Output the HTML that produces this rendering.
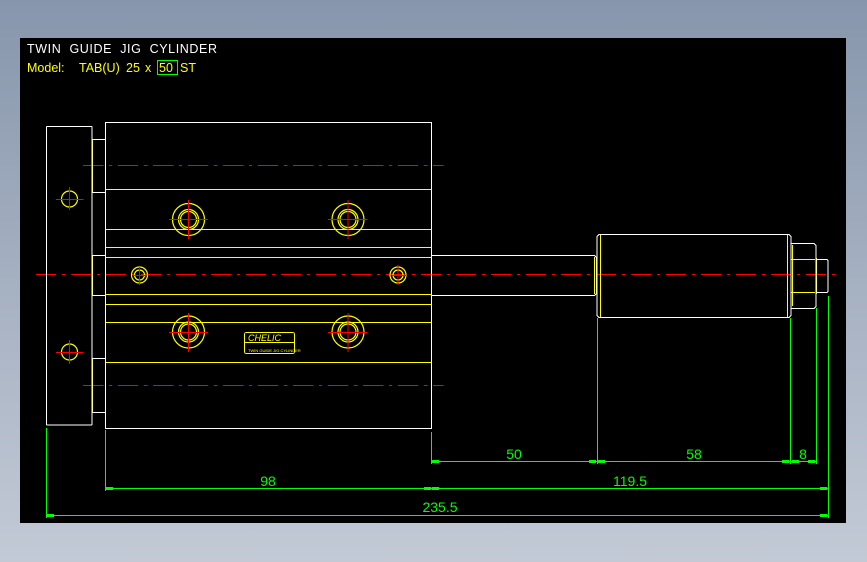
<!DOCTYPE html>
<html><head><meta charset="utf-8"><style>
html,body{margin:0;padding:0;width:867px;height:562px;overflow:hidden;background:linear-gradient(#8796ac,#c3cad6);}
svg{position:absolute;left:0;top:0}
text{font-family:"Liberation Sans",sans-serif}
</style></head><body>
<svg width="867" height="562" viewBox="0 0 867 562">
<rect x="20" y="38" width="826" height="485" fill="#000"/>
<text x="27" y="53" fill="#fff" font-size="12.5" letter-spacing="0.6" xml:space="preserve">TWIN  GUIDE  JIG  CYLINDER</text>
<g fill="#ff0" font-size="12.5">
<text x="27" y="72">Model:</text>
<text x="79" y="72">TAB(U)</text>
<text x="126" y="72">25</text>
<text x="145" y="72">x</text>
<text x="159" y="72">50</text>
<text x="180" y="72">ST</text>
</g>
<rect x="157.5" y="60.5" width="20" height="14" fill="none" stroke="#0f0" stroke-width="1"/>
<g fill="none" stroke-width="1" shape-rendering="crispEdges">
<g stroke="#f00" stroke-dasharray="20,6,3,6">
<line x1="83" y1="165.5" x2="443" y2="165.5"/>
<line x1="36" y1="274.5" x2="838" y2="274.5"/>
<line x1="83" y1="385.5" x2="443" y2="385.5"/>
</g>
<g stroke="#ff0">
<line x1="92.5" y1="139" x2="92.5" y2="192"/>
<line x1="92.5" y1="255" x2="92.5" y2="295"/>
<line x1="92.5" y1="358" x2="92.5" y2="412"/>
<line x1="105.5" y1="139" x2="105.5" y2="412"/>
<line x1="106" y1="189.5" x2="431" y2="189.5"/>
<line x1="106" y1="229.5" x2="431" y2="229.5"/>
<line x1="106" y1="247.5" x2="431" y2="247.5"/>
<line x1="106" y1="257.5" x2="431" y2="257.5"/>
<line x1="106" y1="294.5" x2="431" y2="294.5"/>
<line x1="106" y1="304.5" x2="431" y2="304.5"/>
<line x1="106" y1="322.5" x2="431" y2="322.5"/>
<line x1="106" y1="362.5" x2="431" y2="362.5"/>
<line x1="594.5" y1="257" x2="594.5" y2="294"/>
<line x1="600.5" y1="235" x2="600.5" y2="317"/>
<line x1="787.5" y1="235" x2="787.5" y2="317"/>
<line x1="791" y1="259.5" x2="815" y2="259.5"/>
<line x1="791" y1="292.5" x2="815" y2="292.5"/>
<line x1="792.5" y1="245" x2="792.5" y2="306"/>
<line x1="816.5" y1="258" x2="816.5" y2="294"/>
<rect x="244.5" y="332.5" width="50" height="21" rx="2"/>
<line x1="245" y1="342.5" x2="294" y2="342.5"/>
</g>
<g stroke="#fff">
<rect x="46.5" y="126.5" width="45.5" height="298.5" rx="1"/>
<rect x="105.5" y="122.5" width="326" height="306"/>
<path d="M92 139.5h13M92 192.5h13M92 255.5h13M92 295.5h13M92 358.5h13M92 412.5h13"/>
<path d="M431.5 255.5h163l2 2v36l-2 2h-163"/>
<path d="M599 234.5h190l2 2v79l-2 2h-190l-2-2v-79z"/>
<path d="M791 243.5h23l2 2v61l-2 2h-23"/>
<path d="M816 259.5h11l1 1v31l-1 1h-11"/>
</g>
<g stroke="#0f0">
<path d="M46.5 428v90M105.5 430v61M431.5 432v32M597.5 318v146M790.5 318v146M816.5 308v156M828.5 296v222"/>
<path d="M431.5 461.5h385M105.5 488.5h723M46.5 515.5h782"/>
</g>
</g>
<g fill="none" stroke="#ff0" stroke-width="1.2">
<circle cx="188.5" cy="219.5" r="16"/><circle cx="188.5" cy="219.5" r="10"/><circle cx="188.5" cy="219.5" r="8"/>
<circle cx="348" cy="219.5" r="16"/><circle cx="348" cy="219.5" r="10"/><circle cx="348" cy="219.5" r="8"/>
<circle cx="188.5" cy="332" r="16"/><circle cx="188.5" cy="332" r="10"/><circle cx="188.5" cy="332" r="8"/>
<circle cx="348" cy="332" r="16"/><circle cx="348" cy="332" r="10"/><circle cx="348" cy="332" r="8"/>
<circle cx="139.5" cy="275" r="8"/><circle cx="139.5" cy="275" r="5"/>
<circle cx="398" cy="275" r="8"/><circle cx="398" cy="275" r="5"/>
<circle cx="69.5" cy="199" r="8"/><circle cx="69.5" cy="352" r="8"/>
</g>
<g stroke="#f00" stroke-width="1" shape-rendering="crispEdges">
<path d="M169 219.5h39M188.5 200v39M328 219.5h39M348 200v39M169 332.5h39M188.5 313v39M328 332.5h39M348 313v39M133 275.5h14M139.5 267v18M392 275.5h14M398 265v20M56 199.5h27M69.5 187v23M56 352.5h27M69.5 340v24"/>
</g>
<text x="248" y="341" fill="#ff0" font-size="9" font-style="italic">CHELIC</text>
<text x="248" y="352" fill="#ff0" font-size="4">TWIN GUIDE JIG CYLINDER</text>
<g fill="#0f0">
<rect x="432" y="460" width="7" height="3"/><rect x="589" y="460" width="7" height="3"/><rect x="598" y="460" width="7" height="3"/><rect x="782" y="460" width="7" height="3"/><rect x="792" y="460" width="7" height="3"/><rect x="808" y="460" width="7" height="3"/>
<rect x="106" y="487" width="7" height="3"/><rect x="424" y="487" width="7" height="3"/><rect x="432" y="487" width="7" height="3"/><rect x="820" y="487" width="7" height="3"/>
<rect x="47" y="514" width="7" height="3"/><rect x="820" y="514" width="7" height="3"/>
</g>
<g fill="#0f0" font-size="14" text-anchor="middle">
<text x="514" y="459">50</text><text x="694" y="459">58</text><text x="803" y="459">8</text>
<text x="268" y="486">98</text><text x="630" y="486">119.5</text><text x="440" y="512">235.5</text>
</g>
</svg>
</body></html>
